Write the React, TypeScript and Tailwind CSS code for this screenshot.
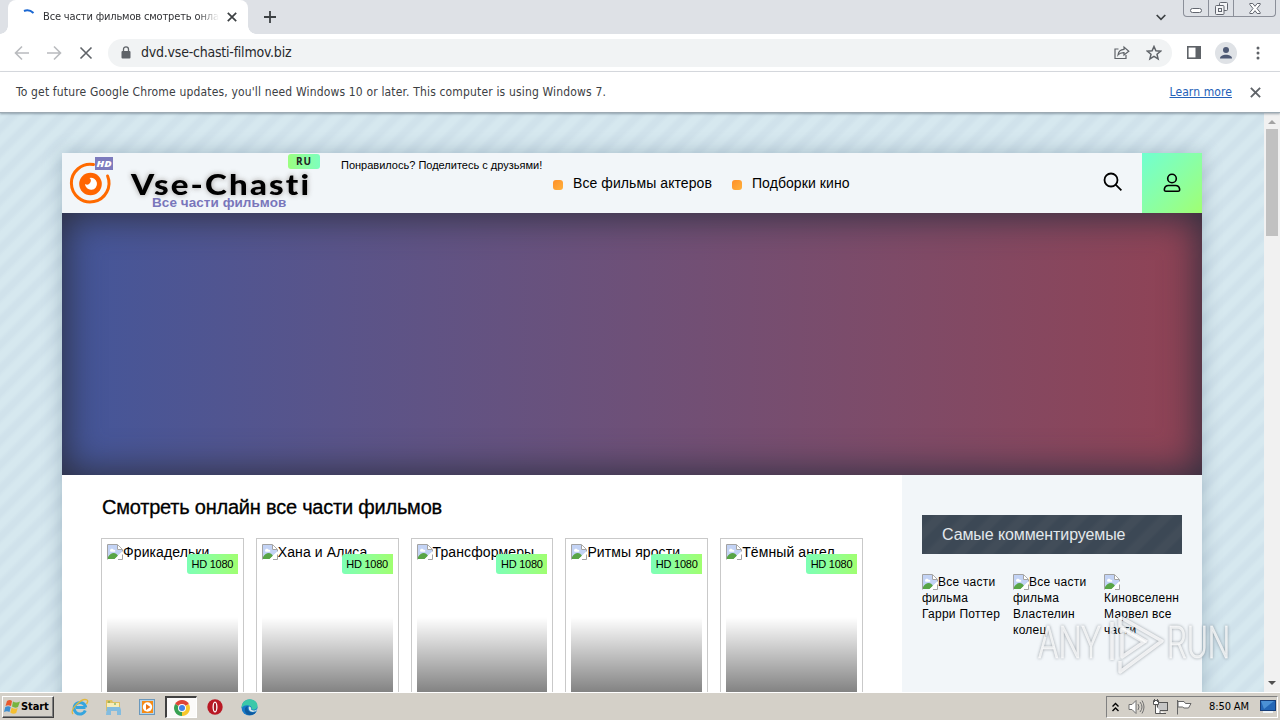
import type { ReactNode } from 'react'

const MOVIES = ['Фрикадельки', 'Хана и Алиса', 'Трансформеры', 'Ритмы ярости', 'Тёмный ангел']

const COMMENTED = [
  ['Все части', 'фильма', 'Гарри Поттер'],
  ['Все части', 'фильма', 'Властелин', 'колец'],
  ['', 'Киновселенн', 'Марвел все', 'части'],
]

function BrokenImage() {
  return (
    <svg width="16" height="16" viewBox="0 0 16 16" className="inline-block shrink-0">
      <path d="M.5 15.500V.5h10l5 5V9" fill="#fff" stroke="#a3a3a3" />
      <path d="M1 1h9v5h5v2L7 15H1z" fill="#c3d3f5" />
      <path d="M3 6.500c0-2 3-2.500 3.500-.8 2-.5 2.500 1.800 1 2H3.500z" fill="#fff" />
      <path d="M1 15v-2c3-5 8-5 10-1l-3 3z" fill="#58a546" />
      <path d="M10.500 1v4.500H15" fill="#fff" stroke="#a3a3a3" />
      <path d="M15.500 10v5.500H11" fill="#fff" stroke="#a3a3a3" />
      <path d="M6.500 16L16 7v3l-6 6z" fill="#fff" />
    </svg>
  )
}

function Cross({ size = 10, color = '#5f6368' }: { size?: number; color?: string }) {
  return (
    <svg width={size} height={size} viewBox="0 0 10 10" stroke={color} strokeWidth="1.7">
      <path d="M.8.8l8.400 8.400M9.200.8L.8 9.200" />
    </svg>
  )
}

function TabStrip() {
  return (
    <div className="flex h-[34px] shrink-0 bg-[#dee1e6]">
      <div className="relative ml-2 flex h-[34px] w-[240px] items-center rounded-t-lg bg-white">
        <span className="absolute -left-2 bottom-0 size-2 bg-[radial-gradient(circle_at_0_0,#dee1e6_7.5px,#fff_8px)]" />
        <span className="absolute -right-2 bottom-0 size-2 bg-[radial-gradient(circle_at_100%_0,#dee1e6_7.5px,#fff_8px)]" />
        <svg width="16" height="16" viewBox="0 0 16 16" className="ml-3 shrink-0" fill="none">
          <path d="M4 2Q9 -.2 13.500 4" stroke="#1a67d2" strokeWidth="2" />
        </svg>
        <div className="ml-[7px] w-[176px] overflow-hidden text-[11px] tracking-[-0.15px] whitespace-nowrap text-[#303134] [mask-image:linear-gradient(90deg,#000_88%,transparent)]">
          Все части фильмов смотреть онла
        </div>
        <div className="ml-[8px]"><Cross color="#3c4043" /></div>
      </div>
      <svg width="12" height="12" viewBox="0 0 12 12" className="mt-[11px] ml-4" stroke="#3c4043" strokeWidth="1.8">
        <path d="M6 0v12M0 6h12" />
      </svg>
      <svg width="10" height="7" viewBox="0 0 10 7" className="mt-[14px] ml-auto" fill="none" stroke="#3c4043" strokeWidth="1.7">
        <path d="M.7 1L5 5.300 9.300 1" />
      </svg>
      <div className="mr-1 ml-[17px] flex h-[17px] w-[93px] rounded-b-[4px] border border-t-0 border-[#8b8f99] text-[#62666f]">
        <div className="flex w-[25px] items-end justify-center border-r border-[#8b8f99] pb-[3px]">
          <span className="h-[5px] w-[12px] rounded-sm border border-[#62666f] bg-white" />
        </div>
        <div className="flex w-[25px] items-center justify-center border-r border-[#8b8f99]">
          <svg width="13" height="13" viewBox="0 0 13 13" fill="#f3f4f6" stroke="currentColor">
            <rect x="4.500" y=".5" width="8" height="8" rx="1" />
            <rect x=".5" y="3.500" width="8.500" height="9" rx="1" />
            <rect x="3.500" y="6.500" width="3" height="3" />
          </svg>
        </div>
        <div className="flex flex-1 items-center justify-center">
          <svg width="12" height="11" viewBox="0 0 12 11" fill="#fff" stroke="currentColor">
            <path d="M.8.5h3L6 3.300 8.200.5h3v1L8 5.500l3.200 4v1h-3L6 7.700l-2.200 2.800h-3v-1L4 5.500.8 1.500z" />
          </svg>
        </div>
      </div>
    </div>
  )
}

function Toolbar() {
  return (
    <div className="flex h-[38px] shrink-0 items-center border-b border-[#dadce0] bg-white">
      <svg width="96" height="16" viewBox="0 0 96 16" fill="none" stroke="#b9bbbe" strokeWidth="1.600" className="shrink-0">
        <path d="M29 8H16M22 1.500L15.500 8l6.500 6.500M47 8h13M54 1.500L60.500 8 54 14.500" />
        <path d="M80.500 2.500l11 11M91.500 2.500l-11 11" stroke="#5f6368" />
      </svg>
      <div className="ml-3 flex h-7 w-[1064px] items-center rounded-full bg-[#f1f3f4]">
        <svg width="10" height="13" viewBox="0 0 10 13" className="ml-[13px]">
          <rect x=".5" y="5" width="9" height="7.500" rx="1" fill="#5f6368" />
          <path d="M2.500 5V3.300a2.500 2.500 0 015 0V5" fill="none" stroke="#5f6368" strokeWidth="1.300" />
        </svg>
        <span className="ml-[10px] text-[14px] tracking-[-0.22px] text-[#27292c]">dvd.vse-chasti-filmov.biz</span>
        <svg width="16" height="15" viewBox="0 0 16 15" className="ml-auto" fill="none" stroke="#5f6368" strokeWidth="1.200">
          <path d="M4.500 4H1v9.500h11V10" />
          <path d="M4 10c.5-4 3-5.500 6-5.600V2l4.800 4.200L10 10V7.600C7 7.500 5.200 8.500 4 10z" />
        </svg>
        <svg width="16" height="16" viewBox="0 0 16 16" className="mr-[10px] ml-4" fill="none" stroke="#5f6368" strokeWidth="1.500">
          <path d="M8 1.500l1.900 4.300 4.700.4-3.600 3.100 1.100 4.600L8 11.400l-4.100 2.500L5 9.300 1.400 6.200l4.700-.4z" />
        </svg>
      </div>
      <svg width="14" height="13" viewBox="0 0 14 13" className="ml-[15px]">
        <rect x=".8" y=".8" width="12.400" height="11.400" fill="#fff" stroke="#5f6368" strokeWidth="1.600" />
        <rect x="8.500" width="5.500" height="13" fill="#5f6368" />
      </svg>
      <svg width="22" height="22" viewBox="0 0 22 22" className="ml-[14px]">
        <circle cx="11" cy="11" r="11" fill="#dfe2e6" />
        <circle cx="11" cy="8" r="3" fill="#4e5974" />
        <path d="M5 16.500c0-5 12-5 12 0z" fill="#4e5974" />
      </svg>
      <svg width="4" height="14" viewBox="0 0 4 14" className="ml-[19px]" fill="#5f6368">
        <circle cx="2" cy="2" r="1.500" />
        <circle cx="2" cy="7" r="1.500" />
        <circle cx="2" cy="12" r="1.500" />
      </svg>
    </div>
  )
}

function InfoBar() {
  return (
    <div className="z-10 flex h-[41px] shrink-0 items-center border-b border-[#9daab3] bg-white px-4 text-[12px] text-[#3c4043] shadow-[0_1px_2px_rgba(80,95,110,0.5)]">
      <span className="tracking-[0.16px] whitespace-nowrap">
        To get future Google Chrome updates, you'll need Windows 10 or later. This computer is using Windows 7.
      </span>
      <a href="#" className="mr-[18px] ml-auto tracking-[0.1px] text-[#2461b8] underline">Learn more</a>
      <div className="mr-[3px]"><Cross size={11} /></div>
    </div>
  )
}

function Logo() {
  return (
    <div className="relative h-[60px] w-[279px] shrink-0">
      <svg width="279" height="60" viewBox="0 0 279 60">
        <path d="M31.500 11.600A18.800 18.800 0 1 0 45.600 23" fill="none" stroke="#ff6a00" strokeWidth="3" strokeLinecap="round" />
        <circle cx="28.500" cy="31" r="11.300" fill="#ff6500" />
        <path d="M27.500 25a6 6 0 1 1-4.500 6q3 2 5-1t-.5-5z" fill="#fff" />
        <rect x="33" y="4" width="18" height="13" fill="#7d7bbd" />
        <text x="34.500" y="14" textLength="15" lengthAdjust="spacingAndGlyphs" fill="#fff" className="font-['Open_Sans',sans-serif] text-[9px] font-extrabold italic">HD</text>
      </svg>
      <span className="absolute top-[20px] left-[69px] origin-left scale-x-[1.14] font-['Lato',sans-serif] text-[29px] leading-[22px] font-black tracking-[1.9px] whitespace-nowrap text-black [text-shadow:0_0_4px_#aaa,0_0_3px_#fff,0_0_6px_#ccc]">
        Vse-Chasti
      </span>
      <span className="absolute top-[42px] left-[90px] font-['Liberation_Sans',sans-serif] text-[13.500px] leading-[15px] font-bold tracking-[0.06px] whitespace-nowrap text-[#7976bb]">
        Все части фильмов
      </span>
      <span className="absolute top-px left-[226px] flex h-[15px] w-8 items-center justify-center rounded-[3px] bg-linear-to-r from-[#9bff80] to-[#7dffbd] font-['Open_Sans',sans-serif] text-[10px] font-bold tracking-[1px] text-[#222]">
        RU
      </span>
    </div>
  )
}

function NavItem({ children }: { children: ReactNode }) {
  return (
    <a href="#" className="flex items-center whitespace-nowrap">
      <span className="mt-[3px] mr-[10px] size-[10px] rounded-[3px] bg-linear-to-br from-[#ff8f28] to-[#ffb13d]" />
      {children}
    </a>
  )
}

function SiteHeader() {
  return (
    <header className="flex h-[60px] bg-[#f2f6f9]">
      <Logo />
      <div className="w-[212px] pt-[5px] text-[11px] leading-[14px] whitespace-nowrap">Понравилось? Поделитесь с друзьями!</div>
      <nav className="flex h-[60px] items-center gap-5 text-[14px] tracking-[0.08px]">
        <NavItem>Все фильмы актеров</NavItem>
        <NavItem>Подборки кино</NavItem>
      </nav>
      <svg width="20" height="20" viewBox="0 0 20 20" className="mt-[19px] mr-[19px] ml-auto" fill="none" stroke="#000" strokeWidth="1.800">
        <circle cx="8" cy="8" r="6.500" />
        <path d="M12.600 12.600l5.800 5.800" />
      </svg>
      <div className="flex w-[60px] items-center justify-center bg-linear-to-br from-[#70ffd0] to-[#a0ff70]">
        <svg width="18" height="20" viewBox="0 0 18 20" fill="none" stroke="#000" strokeWidth="1.600">
          <circle cx="9" cy="5.500" r="4.300" />
          <path d="M3 18.200c-1.500 0-1.800-1-1.600-2.200.5-2.500 1.500-3.500 4-3.500h7.200c2.500 0 3.500 1 4 3.500.2 1.200-.1 2.200-1.600 2.200z" />
        </svg>
      </div>
    </header>
  )
}

function MovieCard({ title }: { title: string }) {
  return (
    <div className="h-[240px] flex-1 border border-[#c9c9c9] p-[5px]">
      <div className="relative h-full">
        <div className="flex text-[14px] leading-[17px] tracking-[0.1px] whitespace-nowrap">
          <BrokenImage />
          {title}
        </div>
        <div className="absolute inset-x-0 top-[73px] h-[120px] bg-linear-to-b from-transparent to-black/78" />
        <div className="absolute top-[10px] right-0 flex h-5 w-[51px] items-center justify-center rounded-l-[3px] bg-linear-to-r from-[#7dffb5] to-[#a0ff70] text-[11px] tracking-[-0.25px] whitespace-nowrap">
          HD 1080
        </div>
      </div>
    </div>
  )
}

function Sidebar() {
  return (
    <aside className="w-[300px] bg-[#f2f6f9] px-5 pt-10">
      <h3 className="flex h-[39px] items-center bg-[repeating-linear-gradient(135deg,#3c4855_0_7px,#424d59_11px_17px,#3c4855_20px)] px-5 text-[16px] tracking-[-0.1px] text-[#e3e8ec]">
        Самые комментируемые
      </h3>
      <div className="mt-5 grid grid-cols-3 gap-[13px] text-[12px] leading-4 tracking-[0.25px]">
        {COMMENTED.map((lines, i) => (
          <div key={i} className="whitespace-nowrap">
            {lines.map((line, j) => (
              <div key={j} className="flex h-4">
                {j === 0 && <BrokenImage />}
                {line}
              </div>
            ))}
          </div>
        ))}
      </div>
    </aside>
  )
}

function Watermark() {
  return (
    <svg width="204" height="66" viewBox="0 0 204 66" className="absolute right-[42px] bottom-[15px] [filter:drop-shadow(0_0_1.5px_rgba(80,90,100,0.7))]">
      <g fill="#fff" fillOpacity=".75" stroke="#fff" strokeOpacity=".6" strokeWidth=".8" className="font-['Roboto',sans-serif] text-[45px] font-light">
        <text x="4" y="47" textLength="63" lengthAdjust="spacingAndGlyphs">ANY</text>
        <text x="133" y="47" textLength="63" lengthAdjust="spacingAndGlyphs">RUN</text>
      </g>
      <g fill="none" stroke="#fff" strokeOpacity=".8" strokeWidth="3.500" strokeLinejoin="round">
        <path d="M78 11v38M86 6l42 24-42 31V50" />
        <path d="M88 18v28l22-15z" />
        <path d="M86 6v9l27 16" />
      </g>
    </svg>
  )
}

function Scrollbar() {
  return (
    <div className="flex w-4 shrink-0 flex-col items-center bg-[#f1f1f1]">
      <span className="mt-[7px] border-x-4 border-b-4 border-x-transparent border-b-[#a3a3a3]" />
      <span className="mt-[5px] h-[107px] w-3 bg-[#c1c1c1]" />
      <span className="mt-auto mb-[7px] border-x-4 border-t-4 border-x-transparent border-t-[#505050]" />
    </div>
  )
}

function Page() {
  return (
    <div className="relative flex h-[579px] shrink-0">
      <div className="w-[1264px] overflow-hidden bg-[repeating-linear-gradient(135deg,#d6e8ef_0_5px,#d0e2eb_9px_13px,#d6e8ef_17px)] pt-10">
        <div className="mx-auto h-[700px] w-[1140px] bg-white font-['Liberation_Sans',sans-serif] text-black shadow-[0_0_18px_rgba(60,90,115,0.33)]">
          <SiteHeader />
          <div className="h-[262px] bg-linear-to-r from-[#43569a] to-[#904254] shadow-[inset_0_0_36px_3px_#2d2f3f]" />
          <div className="flex h-[378px]">
            <main className="w-[840px] pr-[39px] pl-[39px]">
              <h1 className="ml-px pt-5 text-[20px] leading-[24px] tracking-[-0.22px] [-webkit-text-stroke:0.3px_#000]">Смотреть онлайн все части фильмов</h1>
              <div className="mt-[19px] flex gap-3">
                {MOVIES.map(title => <MovieCard key={title} title={title} />)}
              </div>
            </main>
            <Sidebar />
          </div>
        </div>
      </div>
      <Scrollbar />
      <Watermark />
    </div>
  )
}

function TaskIcons() {
  return (
    <div className="ml-[9px] flex items-center">
      {/* Internet Explorer */}
      <div className="flex w-[33px] justify-center">
        <svg width="18" height="18" viewBox="0 0 18 18" fill="none">
          <path d="M14.500 9.500H5M14.300 12.500a5.800 5.800 0 1 1 .4-3" stroke="#36a5de" strokeWidth="3" />
          <path d="M2 16C-2 12 11-1 16 2c1 .8.600 2.500-.500 4" stroke="#e2b83d" strokeWidth="1.400" />
        </svg>
      </div>
      {/* Explorer */}
      <div className="flex w-[34px] justify-center">
        <svg width="17" height="17" viewBox="0 0 17 17">
          <path d="M1 1h6l1 2h7v9H1z" fill="#dfc061" />
          <path d="M2 4h12v5H2z" fill="#f8edb8" />
          <path d="M2 8h13l1 3v5h-4v-4H6v4H1z" fill="#83bcdf" />
          <path d="M3 3h2M9 5h2" stroke="#58a34e" />
        </svg>
      </div>
      {/* Media Player */}
      <div className="flex w-[34px] justify-center">
        <svg width="16" height="16" viewBox="0 0 16 16">
          <rect x=".5" y=".5" width="15" height="15" fill="#b4d4ea" stroke="#6a98bc" />
          <rect x="3" y="2" width="11" height="12" fill="#f58b16" />
          <circle cx="8.500" cy="8" r="4.700" fill="#fff" />
          <path d="M7 5l4.500 3L7 11z" fill="#ed7412" />
        </svg>
      </div>
      {/* Chrome */}
      <div className="ml-px flex h-[22px] w-8 items-center justify-center border border-t-2 border-l-2 border-[#fff] border-t-[#404040] border-l-[#404040] bg-[#fbfaf9]">
        <svg width="16" height="16" viewBox="0 0 16 16">
          <path d="M8 8L1.100 4A8 8 0 0 1 14.900 4z" fill="#df4537" />
          <path d="M8 8l6.900-4A8 8 0 0 1 8 16z" fill="#f8c82c" />
          <path d="M8 8v8A8 8 0 0 1 1.100 4z" fill="#38a152" />
          <circle cx="8" cy="8" r="4" fill="#fff" />
          <circle cx="8" cy="8" r="3" fill="#4383e8" />
        </svg>
      </div>
      {/* Opera */}
      <div className="flex w-[35px] justify-center">
        <svg width="16" height="16" viewBox="0 0 16 16">
          <circle cx="8" cy="8" r="7.700" fill="#b91824" />
          <ellipse cx="8" cy="8" rx="2.500" ry="5.500" fill="#fff" />
          <ellipse cx="8" cy="8" rx="1.200" ry="4.300" fill="#a41822" />
        </svg>
      </div>
      {/* Edge */}
      <div className="flex w-[34px] justify-center">
        <svg width="17" height="17" viewBox="0 0 17 17">
          <circle cx="8.500" cy="8.500" r="8" fill="#1679c8" />
          <path d="M.6 9C.5-2.500 16.500-2 16.500 7c0 4-5 4.500-6 3 1.500-3-6-6-9.900-1z" fill="#3bc8a9" />
          <path d="M7 7c-2 4 2 8 7.500 6 1.500-.6-1 3-5 3C3 16 2 8 7 7z" fill="#0e5a9e" />
          <path d="M8 7.500c2 0 2.500 2 2 3 2 2 5 1 6.500-.5-.5 3-6 4-8 1.500C7.500 10 7.500 8.500 8 7.500z" fill="#dce9e6" />
        </svg>
      </div>
    </div>
  )
}

function Taskbar() {
  return (
    <div className="flex h-7 shrink-0 items-center border-t border-white bg-[#d4d0c8] pt-px font-['DejaVu_Sans_Condensed','DejaVu_Sans',sans-serif] text-black">
      <div className="ml-[2px] flex h-[22px] w-[52px] items-center border border-r-[#404040] border-b-[#404040] border-t-white border-l-white pl-px text-[11px] font-bold tracking-[-0.1px] shadow-[inset_-1px_-1px_#808080]">
        <svg width="17" height="16" viewBox="0 0 17 16" className="shrink-0">
          <path d="M3 2q3-2 5 0L7 7Q4 5.500 1.500 7z" fill="#e8582c" />
          <path d="M9 2.500q3 1.800 7 0L14 8Q11 9.500 8 7.500z" fill="#77b43f" />
          <path d="M1.300 8q3-1.500 5.400 0L5.500 13Q3 11.500 0 13z" fill="#3d8ed0" />
          <path d="M7.700 8.500q3 2 6 .6L12.200 14q-3 1.500-5.900-.6z" fill="#f5bf31" />
        </svg>
        Start
      </div>
      <TaskIcons />
      <div className="mr-[2px] ml-auto flex h-[22px] w-[172px] items-center border border-t-[#808080] border-r-white border-b-white border-l-[#808080] pl-[5px]">
        <svg width="7" height="10" viewBox="0 0 7 10" fill="none" stroke="#000" strokeWidth="1.400">
          <path d="M.5 4.500l3-3 3 3M.5 9l3-3 3 3" />
        </svg>
        <svg width="17" height="16" viewBox="0 0 17 16" className="ml-[9px]" fill="#fff" stroke="#707070">
          <path d="M1 5.500h3l4-4v13l-4-4H1z" />
          <path d="M10 5q2 3 0 6M12 3q4 5 0 10M14 1.500q4 6.500 0 13" fill="none" />
        </svg>
        <svg width="17" height="16" viewBox="0 0 17 16" className="ml-[7px]" fill="#fff" stroke="#555">
          <rect x="5.500" y="3.500" width="10" height="8" fill="#c6c6c6" />
          <path d="M8 12v2.500h6M1.500 1.500h5v4h-5zM3.500 6v8.500H10" />
          <path d="M2.500 0v3M5.500 0v3" />
        </svg>
        <svg width="16" height="16" viewBox="0 0 16 16" className="ml-[7px]" fill="#fff" stroke="#666">
          <path d="M1.500 1v14.500M2 2.500h6l1.500 2H15L12.500 9H8L6.500 8H2z" />
        </svg>
        <span className="ml-[17px] text-[11px] tracking-[-0.1px] whitespace-nowrap">8:50 AM</span>
        <svg width="16" height="14" viewBox="0 0 16 14" className="mr-px ml-auto shrink-0">
          <rect x=".5" y=".5" width="15" height="10" fill="#2467b6" stroke="#153d79" />
          <path d="M1 1h13L4 9z" fill="#4b91d5" />
          <path d="M3 12h10" stroke="#eef3f6" strokeWidth="2" />
        </svg>
      </div>
    </div>
  )
}

export default function App() {
  return (
    <div className="flex h-[720px] w-[1280px] flex-col overflow-hidden bg-white font-['DejaVu_Sans_Condensed','DejaVu_Sans',sans-serif]">
      <TabStrip />
      <Toolbar />
      <InfoBar />
      <Page />
      <Taskbar />
    </div>
  )
}
